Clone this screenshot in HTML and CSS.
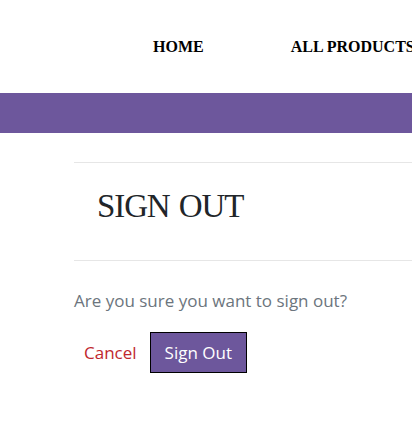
FILE: index.html
```html
<!DOCTYPE html>
<html>
<head>
<meta charset="utf-8">
<link rel="stylesheet" href="styles.css">
</head>
<body>
<header class="header">
  <nav class="nav">
    <a class="nav-link" href="#">HOME</a>
    <a class="nav-link" href="#">ALL PRODUCTS</a>
  </nav>
</header>
<div class="band"></div>
<main class="content">
  <div class="title-box">
    <h1 class="title">SIGN OUT</h1>
  </div>
  <p class="question">Are you sure you want to sign out?</p>
  <div class="actions">
    <a class="cancel" href="#">Cancel</a>
    <button class="btn">Sign Out</button>
  </div>
</main>
</body>
</html>
```
FILE: styles.css
```css
html, body {
  margin: 0;
  padding: 0;
  background: #fff;
  overflow: hidden;
}
body {
  width: 412px;
  font-family: "Open Sans", "Noto Sans", sans-serif;
}
.header {
  height: 93px;
  display: flex;
  align-items: flex-start;
}
.nav {
  display: flex;
  gap: 87px;
  padding: 38px 0 0 153px;
  white-space: nowrap;
}
.nav-link {
  font-family: "Liberation Serif", serif;
  font-weight: bold;
  font-size: 16px;
  color: #000;
  text-decoration: none;
}
.band {
  height: 40px;
  background: #6d579c;
}
.content {
  margin: 29px 0 0 74px;
}
.title-box {
  border-top: 1px solid #e6e6e6;
  border-bottom: 1px solid #e6e6e6;
  height: 97px;
  display: flex;
  align-items: center;
  padding-left: 23px;
}
.title {
  margin: 0 0 10px 0;
  font-family: "Liberation Serif", serif;
  font-weight: normal;
  font-size: 33px;
  letter-spacing: -1.1px;
  word-spacing: 2px;
  color: #212529;
}
.question {
  margin: 28px 0 0 0;
  font-size: 17px;
  color: #6c757d;
}
.actions {
  display: flex;
  align-items: center;
  gap: 13px;
  margin-top: 20px;
  padding-left: 10px;
}
.cancel {
  color: #c0272d;
  text-decoration: none;
  font-size: 17px;
}
.btn {
  background: #6d579c;
  color: #fff;
  border: 1px solid #000;
  font-family: "Open Sans", "Noto Sans", sans-serif;
  font-size: 17px;
  height: 41px;
  padding: 0 14px;
}
```
